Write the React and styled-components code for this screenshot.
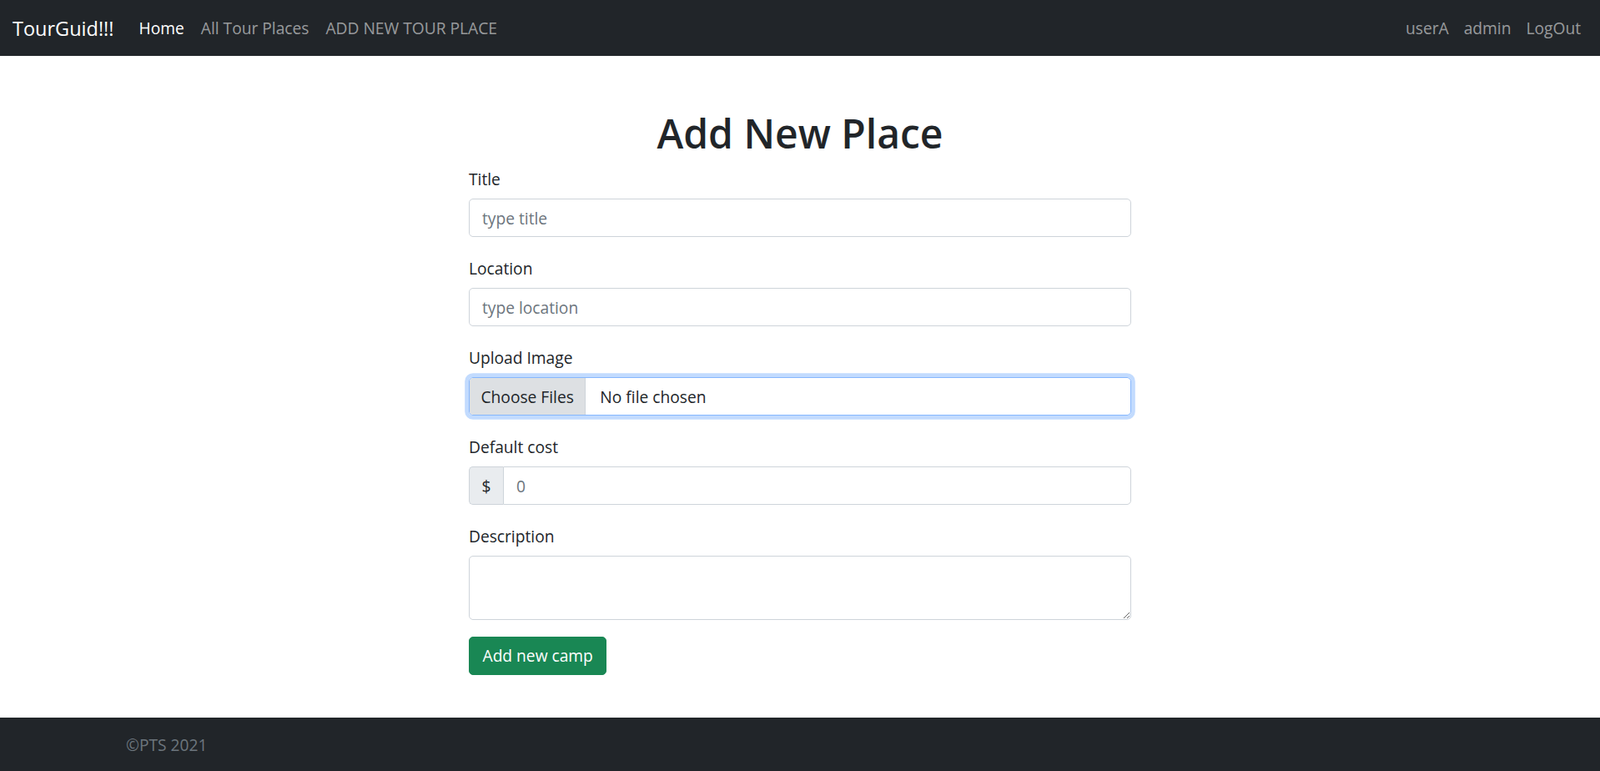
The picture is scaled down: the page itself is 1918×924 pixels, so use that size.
import React from 'react'
import styled, { createGlobalStyle } from 'styled-components'

const GlobalStyle = createGlobalStyle`
  * { box-sizing: border-box; }
  body {
    margin: 0;
    font-family: 'Open Sans', 'Noto Sans', sans-serif;
    font-size: 19.2px;
    color: #212529;
    background: #fff;
  }
`

const Page = styled.div`
  min-height: 100vh;
  display: flex;
  flex-direction: column;
`

const Navbar = styled.nav`
  height: 67px;
  flex: none;
  background: #212529;
  display: flex;
  align-items: center;
  padding: 0 14px 0 15px;
`

const Brand = styled.a`
  font-size: 23.5px;
  color: #fff;
  text-decoration: none;
  margin-right: 20px;
`

const NavList = styled.ul`
  list-style: none;
  margin: 0;
  padding: 0;
  display: flex;
  margin-left: ${p => (p.$right ? 'auto' : '0')};
`

const NavLink = styled.a`
  display: block;
  padding: 0 ${p => (p.$tight ? 9 : 10)}px;
  font-size: 19.2px;
  color: ${p => (p.$active ? '#fff' : 'rgba(255, 255, 255, 0.55)')};
  text-decoration: none;
`

const Main = styled.main`
  flex: 1;
  padding: 64px 0 51px;
`

const Container = styled.div`
  width: 794px;
  margin: 0 auto;
`

const Heading = styled.h1`
  margin: 0 0 8px;
  text-align: center;
  font-size: 48px;
  font-weight: 600;
  line-height: 1.2;
`

const Field = styled.div`
  margin-bottom: 19.2px;
`

const Label = styled.label`
  display: block;
  line-height: 28.8px;
  padding-top: 4px;
  margin-bottom: 9px;
`

const Input = styled.input`
  display: block;
  width: 100%;
  height: 46px;
  padding: 0 15px;
  font: inherit;
  color: #212529;
  border: 1px solid #ced4da;
  border-radius: ${p => (p.$grouped ? '0 5px 5px 0' : '5px')};
  outline: none;
  &::placeholder { color: #6c757d; }
`

const FileBox = styled.label`
  display: flex;
  height: 46px;
  border: 1px solid #86b7fe;
  border-radius: 5px;
  box-shadow: 0 0 0 4.8px rgba(13, 110, 253, 0.25);
  overflow: hidden;
  cursor: pointer;
  input { display: none; }
`

const FileButton = styled.span`
  display: flex;
  align-items: center;
  padding: 0 13.5px;
  background: #dde0e3;
  border-right: 1px solid #ced4da;
`

const FileName = styled.span`
  display: flex;
  align-items: center;
  padding-left: 17px;
`

const Group = styled.div`
  display: flex;
`

const Addon = styled.span`
  flex: none;
  width: 41px;
  height: 46px;
  display: flex;
  align-items: center;
  justify-content: center;
  background: #e9ecef;
  border: 1px solid #ced4da;
  border-right: none;
  border-radius: 5px 0 0 5px;
`

const TextArea = styled.textarea`
  display: block;
  width: 100%;
  height: 77px;
  padding: 7px 15px;
  font: inherit;
  border: 1px solid #ced4da;
  border-radius: 5px;
  resize: vertical;
  outline: none;
`

const Button = styled.button`
  height: 46px;
  padding: 0 15.5px;
  font: inherit;
  color: #fff;
  background: #198754;
  border: 1px solid #198754;
  border-radius: 5px;
  cursor: pointer;
`

const Footer = styled.footer`
  height: 64px;
  flex: none;
  background: #212529;
  display: flex;
  align-items: center;
  padding-left: 151px;
  color: #6c757d;
`

export default function App() {
  return (
    <Page>
      <GlobalStyle />
      <Navbar>
        <Brand href='/'>TourGuid!!!</Brand>
        <NavList>
          <li><NavLink href='/' $active>Home</NavLink></li>
          <li><NavLink href='/places'>All Tour Places</NavLink></li>
          <li><NavLink href='/places/new'>ADD NEW TOUR PLACE</NavLink></li>
        </NavList>
        <NavList $right>
          <li><NavLink href='/user' $tight>userA</NavLink></li>
          <li><NavLink href='/admin' $tight>admin</NavLink></li>
          <li><NavLink href='/logout' $tight>LogOut</NavLink></li>
        </NavList>
      </Navbar>

      <Main>
        <Container>
          <Heading>Add New Place</Heading>
          <form onSubmit={e => e.preventDefault()}>
            <Field>
              <Label htmlFor='title'>Title</Label>
              <Input id='title' placeholder='type title' />
            </Field>
            <Field>
              <Label htmlFor='location'>Location</Label>
              <Input id='location' placeholder='type location' />
            </Field>
            <Field>
              <Label>Upload Image</Label>
              <FileBox>
                <input type='file' multiple />
                <FileButton>Choose Files</FileButton>
                <FileName>No file chosen</FileName>
              </FileBox>
            </Field>
            <Field>
              <Label htmlFor='price'>Default cost</Label>
              <Group>
                <Addon>$</Addon>
                <Input id='price' placeholder='0' $grouped />
              </Group>
            </Field>
            <Field>
              <Label htmlFor='description'>Description</Label>
              <TextArea id='description' />
            </Field>
            <Button>Add new camp</Button>
          </form>
        </Container>
      </Main>

      <Footer>©PTS 2021</Footer>
    </Page>
  )
}
